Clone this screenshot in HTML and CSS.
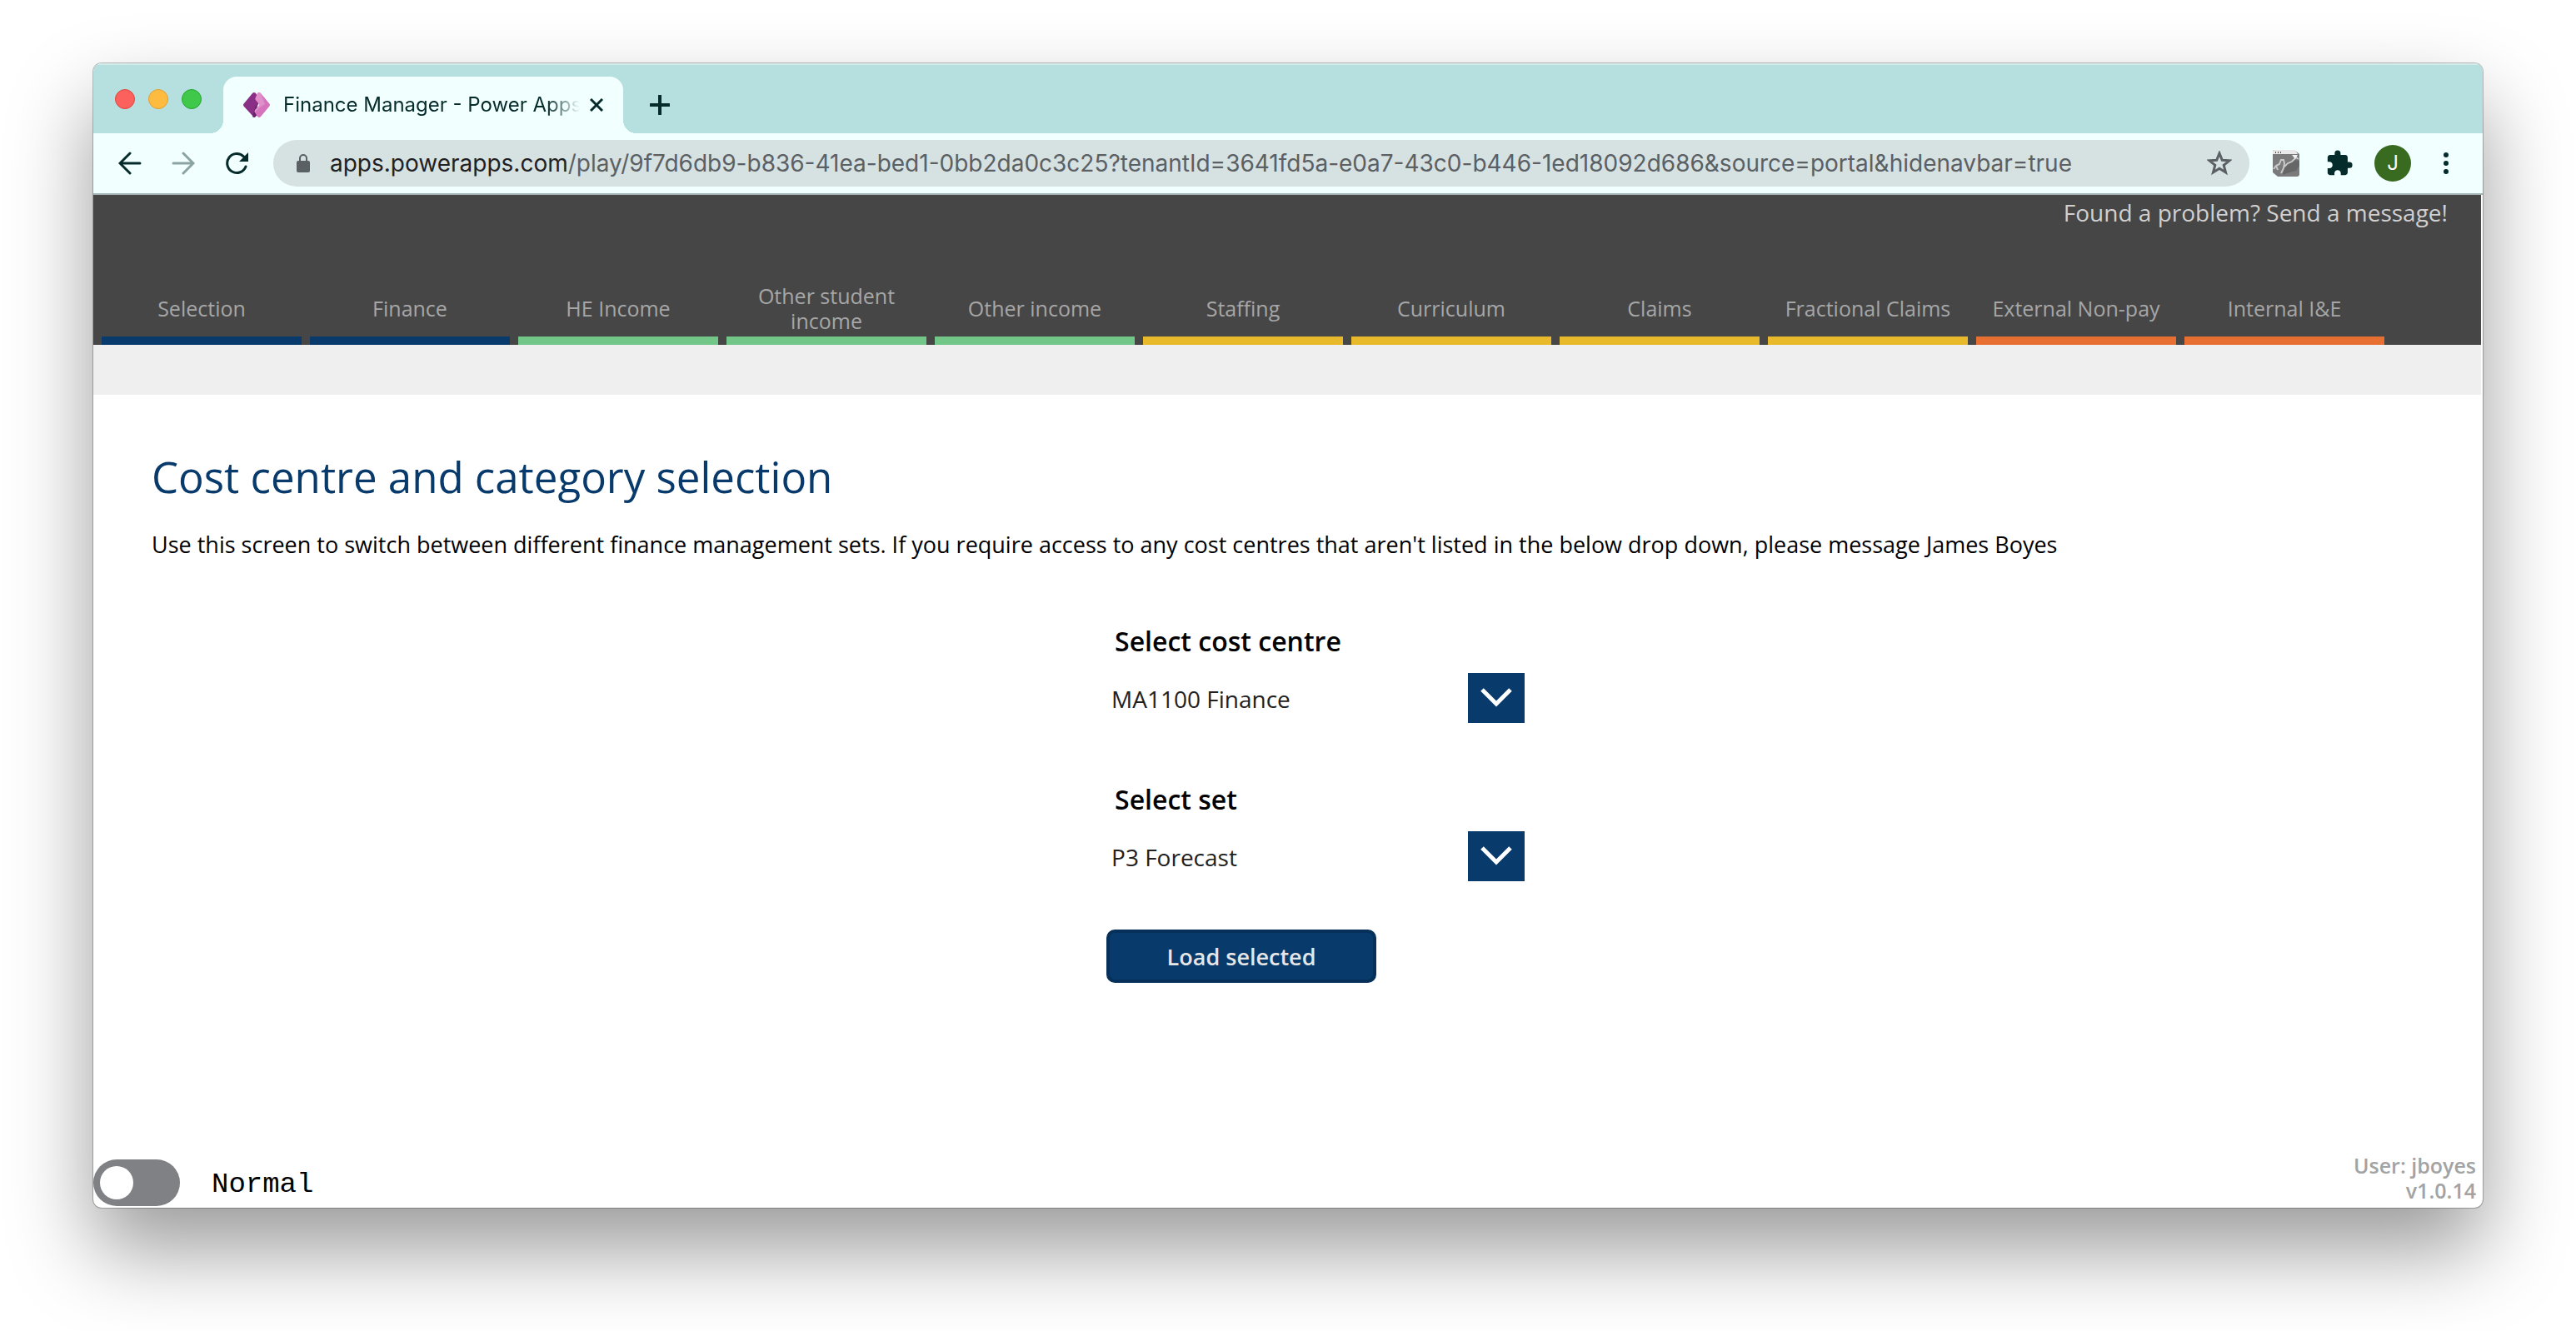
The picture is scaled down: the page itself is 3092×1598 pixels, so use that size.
FILE: index.html
```html
<!DOCTYPE html>
<html lang="en">
<head>
<meta charset="utf-8">
<title>Finance Manager - Power Apps</title>
<link rel="stylesheet" href="styles.css">
</head>
<body>
<div class="window">
  <div class="tab-strip">
    <div class="lights">
      <button class="light light-close" aria-label="Close window"></button>
      <button class="light light-min" aria-label="Minimise window"></button>
      <button class="light light-max" aria-label="Zoom window"></button>
    </div>
    <div class="tab">
      <svg class="favicon" viewBox="0 0 32 30" aria-hidden="true">
        <path d="M11 1q2-2 4 0l5 8-8 20L1 17q-2-2 0-4z" fill="#8a2f86"/>
        <path d="M11 29q2 2 4 0l4-6-4-8z" fill="#6a2368"/>
        <path d="M17 1q2-2 4 0l10 12q2 2 0 4L21 29q-2 2-4 0l-3-5q-1-2 1-4l4-4q1-1 0-2l-4-5q-1-1 0-3z" fill="#d673bd"/>
        <path d="M17 1q2-2 4 0l5 13-6 4-6 6q-1-2 1-4l4-4q1-1 0-2l-4-5q-1-1 0-3z" fill="#e08fcb"/>
      </svg>
      <span class="tab-title">Finance Manager - Power Apps</span>
      <button class="tab-close" aria-label="Close tab"><svg width="16" height="16" viewBox="0 0 16 16"><path d="M1 1l14 14M15 1L1 15" stroke="currentColor" stroke-width="3"/></svg></button>
    </div>
    <button class="new-tab" aria-label="New tab"><svg width="24" height="24" viewBox="0 0 24 24"><path d="M12 1v22M1 12h22" stroke="currentColor" stroke-width="4" stroke-linecap="round"/></svg></button>
  </div>

  <div class="toolbar">
    <button class="tool" aria-label="Back"><svg width="28" height="28" viewBox="0 0 28 28"><path d="M26 14H3M14 2L2 14l12 12" fill="none" stroke="currentColor" stroke-width="3" stroke-linecap="round"/></svg></button>
    <button class="tool tool-off" aria-label="Forward"><svg width="28" height="28" viewBox="0 0 28 28"><path d="M2 14h23M14 2l12 12-12 12" fill="none" stroke="currentColor" stroke-width="3" stroke-linecap="round"/></svg></button>
    <button class="tool" aria-label="Reload"><svg width="28" height="28" viewBox="0 0 28 28"><path d="M25 18A11.500 11.500 0 1 1 22.500 6" fill="none" stroke="currentColor" stroke-width="3" stroke-linecap="round"/><path d="M28 1v11H17z" fill="currentColor"/></svg></button>
    <div class="omnibox">
      <button class="lock" aria-label="Site information"><svg width="16" height="22" viewBox="0 0 16 22"><path d="M4 9V5a4 4 0 0 1 8 0v4" fill="none" stroke="currentColor" stroke-width="2"/><rect y="8" width="16" height="14" rx="2" fill="currentColor"/></svg></button>
      <div class="url" role="textbox" aria-label="Address" tabindex="0"><span class="url-host">apps.powerapps.com</span>/play/9f7d6db9-b836-41ea-bed1-0bb2da0c3c25?tenantId=3641fd5a-e0a7-43c0-b446-1ed18092d686&amp;source=portal&amp;hidenavbar=true</div>
      <button class="star" aria-label="Bookmark this tab"><svg width="30" height="30" viewBox="0 0 30 30"><path d="M15 3l3.300 8.300 8.700.5-6.800 5.600 2.300 8.600L15 21.200 7.500 26l2.300-8.600L3 11.800l8.700-.5z" fill="none" stroke="currentColor" stroke-width="3"/></svg></button>
    </div>
    <button class="tool" aria-label="Window capture"><svg width="32" height="32" viewBox="0 0 32 32">
      <path d="M0 2a2 2 0 0 1 2-2h24l6 5v24a3 3 0 0 1-3 3H6l-6-5z" fill="#7b7b7b"/>
      <path d="M0 5V2a2 2 0 0 1 2-2h25l3 5z" fill="#e9e9e9"/>
      <path d="M3 2h1v2H3zM6 2h1v2H6zM9 2h1v2H9z" fill="#555"/>
      <path d="M14 17l5-3 6-2 7 1v6l-4 6-8 2-8 3z" fill="#666"/>
      <path d="M1 23l3-4 4-2 2-5h3l1 4-1 6-3 6M14 20l4-4 5-2 5-5 3 2M4 19l2 5" fill="none" stroke="#c8c8c8" stroke-width="2"/>
      <path d="M23 6l4 5 3-5z" fill="#f0f0f0"/>
    </svg></button>
    <button class="tool" aria-label="Extensions"><svg width="34" height="34" viewBox="0 0 24 24"><path fill="currentColor" d="M20.500 11H19V7c0-1.100-.9-2-2-2h-4V3.500a2.500 2.500 0 0 0-5 0V5H4c-1.100 0-1.990.9-1.990 2v3.800H3.500c1.490 0 2.700 1.210 2.700 2.700s-1.210 2.700-2.700 2.700H2V20c0 1.100.9 2 2 2h3.800v-1.500c0-1.490 1.210-2.700 2.700-2.700s2.700 1.210 2.700 2.700V22H17c1.100 0 2-.9 2-2v-4h1.500a2.500 2.500 0 0 0 0-5z"/></svg></button>
    <button class="tool" aria-label="Profile"><span class="avatar">J</span></button>
    <button class="tool" aria-label="Menu"><svg width="8" height="28" viewBox="0 0 8 28"><g fill="currentColor"><circle cx="4" cy="4" r="3"/><circle cx="4" cy="14" r="3"/><circle cx="4" cy="24" r="3"/></g></svg></button>
  </div>

  <header class="app-header">
    <a class="problem" href="#message">Found a problem? Send a message!</a>
    <nav class="nav">
      <a class="nav-item blue" href="#selection">Selection</a>
      <a class="nav-item blue" href="#finance">Finance</a>
      <a class="nav-item green" href="#he-income">HE Income</a>
      <a class="nav-item green" href="#student-income">Other student income</a>
      <a class="nav-item green" href="#other-income">Other income</a>
      <a class="nav-item yellow" href="#staffing">Staffing</a>
      <a class="nav-item yellow" href="#curriculum">Curriculum</a>
      <a class="nav-item yellow" href="#claims">Claims</a>
      <a class="nav-item yellow wide" href="#fractional">Fractional Claims</a>
      <a class="nav-item orange wide" href="#external">External Non-pay</a>
      <a class="nav-item orange" href="#internal">Internal I&amp;E</a>
    </nav>
  </header>
  <div class="subbar"></div>

  <main class="content">
    <div class="intro">
      <h1>Cost centre and category selection</h1>
      <p>Use this screen to switch between different finance management sets. If you require access to any cost centres that aren't listed in the below drop down, please message James Boyes</p>
    </div>
    <form class="picker">
      <div class="field">
        <label for="centre">Select cost centre</label>
        <div class="dropdown">
          <select id="centre"><option>MA1100 Finance</option></select>
          <span class="chevron"><svg width="38" height="24" viewBox="0 0 38 24"><path d="M2 2l17 17L36 2" fill="none" stroke="#fff" stroke-width="5"/></svg></span>
        </div>
      </div>
      <div class="field">
        <label for="set">Select set</label>
        <div class="dropdown">
          <select id="set"><option>P3 Forecast</option></select>
          <span class="chevron"><svg width="38" height="24" viewBox="0 0 38 24"><path d="M2 2l17 17L36 2" fill="none" stroke="#fff" stroke-width="5"/></svg></span>
        </div>
      </div>
      <button class="load" type="button">Load selected</button>
    </form>
  </main>

  <footer class="app-footer">
    <label class="mode"><input class="toggle" type="checkbox" role="switch"><span class="mode-name">Normal</span></label>
    <p class="user">User: jboyes<br>v1.0.14</p>
  </footer>
</div>
</body>
</html>
```
FILE: styles.css
```css
* { box-sizing: border-box; }

body {
  margin: 0;
  min-height: 100vh;
  padding: 76px 112px 148px;
  display: flex;
  background: #fff;
  font-family: "Segoe UI", "Open Sans", sans-serif;
  overflow: hidden;
}

button {
  border: 0;
  padding: 0;
  background: none;
  color: inherit;
  font: inherit;
  display: flex;
  align-items: center;
  justify-content: center;
}

a { color: inherit; text-decoration: none; }
h1, p { margin: 0; }

.window {
  flex: 1;
  min-width: 0;
  display: flex;
  flex-direction: column;
  background: #fff;
  border-radius: 10px;
  overflow: hidden;
  box-shadow: 0 0 0 1px rgba(0, 0, 0, .25), 0 50px 100px rgba(0, 0, 0, .4);
}

/* Browser chrome */
.tab-strip {
  height: 84px;
  display: flex;
  background: #b6e0df;
  box-shadow: inset 0 2px #d3eceb;
  color: #062b2b;
  font-family: Inter, sans-serif;
}

.lights {
  display: flex;
  align-items: center;
  gap: 16px;
  padding: 2px 26px 0;
}
.light { width: 24px; height: 24px; border-radius: 50%; border: 1px solid; }
.light-close { background: #fc615d; border-color: #e0443e; }
.light-min { background: #fdbc40; border-color: #dea035; }
.light-max { background: #3fc84a; border-color: #28a52f; }

.tab {
  position: relative;
  width: 480px;
  margin-top: 16px;
  padding: 0 24px;
  display: flex;
  align-items: center;
  background: #f2ffff;
  border-radius: 16px 16px 0 0;
}
.tab::before, .tab::after {
  content: "";
  position: absolute;
  bottom: 0;
  width: 16px;
  height: 16px;
}
.tab::before { right: 100%; background: radial-gradient(circle at 0 0, transparent 16px, #f2ffff 16px); }
.tab::after { left: 100%; background: radial-gradient(circle at 100% 0, transparent 16px, #f2ffff 16px); }
.favicon { width: 32px; height: 30px; flex: none; }
.tab-title {
  flex: 1;
  min-width: 0;
  margin: 0 12px 0 16px;
  overflow: hidden;
  white-space: nowrap;
  font-size: 24px;
  line-height: 32px;
  -webkit-mask-image: linear-gradient(to right, #000 calc(100% - 40px), transparent);
  mask-image: linear-gradient(to right, #000 calc(100% - 40px), transparent);
}
.tab-close { width: 16px; height: 16px; }
.new-tab { width: 48px; margin: 16px 0 0 20px; }

.toolbar {
  height: 74px;
  padding: 0 12px;
  display: flex;
  align-items: center;
  background: #f2ffff;
  border-bottom: 2px solid #a5b5b5;
  color: #062b2b;
  font-family: Inter, sans-serif;
}
.tool { width: 64px; height: 56px; flex: none; }
.tool-off { color: #8ba3a3; }
.omnibox {
  flex: 1;
  min-width: 0;
  height: 56px;
  margin: 0 12px;
  padding: 0 21px 0 28px;
  display: flex;
  align-items: center;
  border-radius: 28px;
  background: #d6e1e1;
  color: #5b6064;
}
.url {
  flex: 1;
  min-width: 0;
  margin-left: 24px;
  overflow: hidden;
  white-space: nowrap;
  font-size: 28px;
  line-height: 36px;
}
.url-host { color: #1f2124; }
.avatar {
  width: 44px;
  height: 44px;
  border-radius: 50%;
  background: #386a20;
  color: #fff;
  font-size: 24px;
  line-height: 44px;
}

/* App header */
.app-header {
  height: 180px;
  margin-right: 2px;
  display: flex;
  flex-direction: column;
  justify-content: space-between;
  background: #464646;
}
.problem {
  align-self: flex-end;
  margin-right: 40px;
  color: #d0d0d0;
  font-size: 28px;
  line-height: 42px;
}
.nav {
  display: grid;
  grid-template-columns: repeat(11, 240px);
  gap: 10px;
  padding-left: 10px;
}
.nav-item {
  height: 76px;
  padding: 0 24px 2px;
  display: flex;
  align-items: center;
  justify-content: center;
  text-align: center;
  border-bottom: 10px solid;
  font-size: 25px;
  line-height: 30px;
  color: #a6a6a6;
}
.wide { padding: 0 10px 2px; }
.blue { border-color: #083a6b; }
.green { border-color: #72c687; }
.yellow { border-color: #e8ba2b; }
.orange { border-color: #e76f31; }
.subbar { height: 60px; margin-right: 2px; background: #efefef; }

/* Page content */
.content { flex: 1; }
.intro { padding: 62px 70px 0; }
h1 {
  font-size: 51px;
  line-height: 72px;
  font-weight: 400;
  color: #083a6b;
}
.intro p {
  margin-top: 26px;
  font-size: 27px;
  line-height: 40px;
  color: #000;
}

.picker { margin: 72px 0 0 42.4%; width: 502px; }
.field + .field { margin-top: 68px; }
.field label {
  display: block;
  padding-left: 10px;
  font-size: 32px;
  line-height: 48px;
  font-weight: 600;
}
.dropdown { position: relative; margin-top: 14px; }
select {
  appearance: none;
  display: block;
  width: 100%;
  height: 60px;
  padding: 2px 80px 0 6px;
  border: 0;
  background: transparent;
  font: 28px/58px "Segoe UI", "Open Sans", sans-serif;
  color: #212121;
}
.chevron {
  position: absolute;
  top: 0;
  right: 0;
  width: 68px;
  height: 60px;
  display: flex;
  align-items: center;
  justify-content: center;
  background: #083a6b;
  pointer-events: none;
}
.load {
  width: 324px;
  height: 64px;
  margin-top: 58px;
  border: 4px solid #063059;
  border-radius: 10px;
  background: #083a6b;
  color: #e6e6e6;
  font-size: 27px;
  font-weight: 600;
}

/* Status row */
.app-footer {
  display: flex;
  justify-content: space-between;
  align-items: flex-end;
  padding-bottom: 2px;
}
.mode {
  display: flex;
  align-items: center;
  gap: 38px;
  font: 34px/52px "Courier New", "Liberation Mono", monospace;
  color: #000;
}
.mode-name { padding-top: 4px; }
.toggle {
  appearance: none;
  margin: 0;
  width: 104px;
  height: 56px;
  padding: 8px;
  border-radius: 28px;
  background: #808184;
}
.toggle::before {
  content: "";
  display: block;
  width: 40px;
  height: 40px;
  border-radius: 50%;
  background: #fff;
}
.toggle:checked { background: #083a6b; }
.toggle:checked::before { margin-left: auto; }
.user {
  padding: 0 8px 4px 0;
  text-align: right;
  font-size: 25px;
  line-height: 30px;
  font-weight: 600;
  color: #a3a3a3;
}
```
